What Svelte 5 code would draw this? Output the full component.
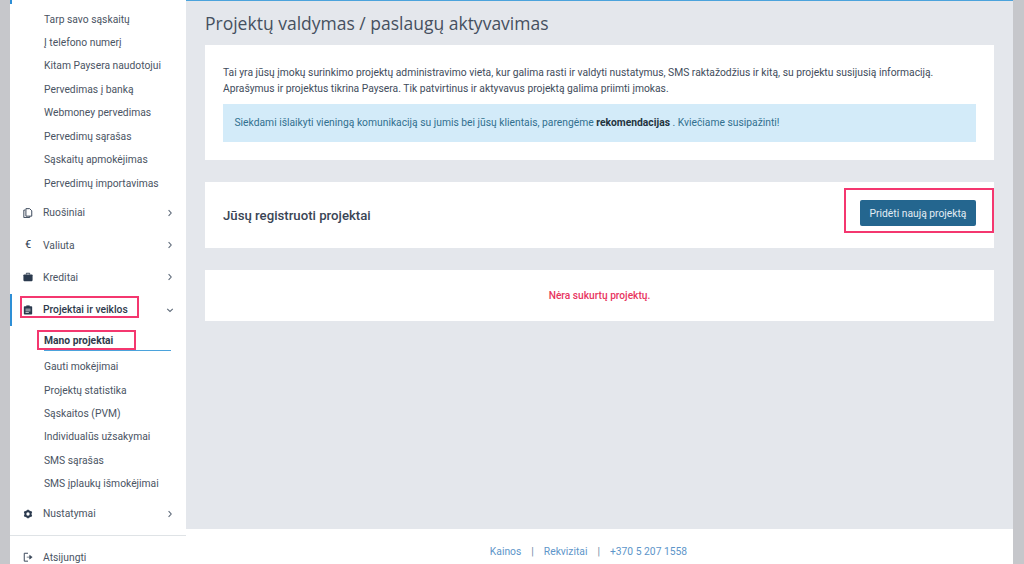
<script>
  const topLinks = ['Tarp savo sąskaitų','Į telefono numerį','Kitam Paysera naudotojui','Pervedimas į banką','Webmoney pervedimas','Pervedimų sąrašas','Sąskaitų apmokėjimas','Pervedimų importavimas'];
  const subLinks = ['Gauti mokėjimai','Projektų statistika','Sąskaitos (PVM)','Individualūs užsakymai','SMS sąrašas','SMS įplaukų išmokėjimai'];
</script>

{#snippet chevron()}
  <svg class="chev" width="8" height="8" viewBox="0 0 8 8"><path d="M2.600 1.200 5.200 4 2.600 6.800" fill="none" stroke="#5f6b7a" stroke-width="1.100"/></svg>
{/snippet}

<div class="page">
  <aside class="side">
    <span class="tick"></span>
    <div class="scroll">
      <ul class="subs top">
        {#each topLinks as l}<li>{l}</li>{/each}
      </ul>
      <div class="item first">
        <svg class="ico" viewBox="0 0 12 12"><path d="M2.500 2.500H1V11.500h7V10" fill="none" stroke="#3d4a5c" stroke-width="1.200"/><path d="M3.500 .8h4.500l2.500 2.500v6.500H3.500z" fill="none" stroke="#3d4a5c" stroke-width="1.200"/></svg>
        <span>Ruošiniai</span>{@render chevron()}
      </div>
      <div class="item">
        <span class="ico euro">€</span>
        <span>Valiuta</span>{@render chevron()}
      </div>
      <div class="item">
        <svg class="ico" viewBox="0 0 12 12"><path d="M4 3V1.500h4V3" fill="none" stroke="#2b3a4e" stroke-width="1.100"/><rect x="0.500" y="3" width="11" height="8" rx="1" fill="#2b3a4e"/></svg>
        <span>Kreditai</span>{@render chevron()}
      </div>
      <div class="item active">
        <svg class="ico" viewBox="0 0 12 12"><rect x="1" y="1.500" width="10" height="10" rx="1" fill="#2b3a4e"/><rect x="4" y="0.500" width="4" height="2" fill="#2b3a4e"/><path d="M3 5h6M3 7h6M3 9h4" stroke="#fff" stroke-width=".8"/></svg>
        <span>Projektai ir veiklos</span>
        <svg class="chev" width="8" height="8" viewBox="0 0 8 8"><path d="M1.200 2.800 4 5.400 6.800 2.800" fill="none" stroke="#5f6b7a" stroke-width="1.100"/></svg>
        <span class="mark markA"></span>
      </div>
      <div class="current"><span>Mano projektai</span><span class="mark markB"></span></div>
      <ul class="subs after">
        {#each subLinks as l}<li>{l}</li>{/each}
      </ul>
      <div class="item settings">
        <svg class="ico" viewBox="0 0 12 12"><circle cx="6" cy="6" r="3.200" fill="none" stroke="#2b3a4e" stroke-width="2.400"/><path d="M6 .8v2M6 9.200v2M1.500 3.400l1.700 1M8.800 7.600l1.700 1M1.500 8.600l1.700-1M8.800 4.400l1.700-1" stroke="#2b3a4e" stroke-width="2"/></svg>
        <span>Nustatymai</span>{@render chevron()}
      </div>
      <div class="item logout">
        <svg class="ico" viewBox="0 0 12 12"><path d="M6 1.500H1.500v9.500H6" fill="none" stroke="#3d4a5c" stroke-width="1.200"/><path d="M4.500 6.200H8V4l3 2.200L8 8.500V6.200" fill="#3d4a5c" stroke="#3d4a5c" stroke-width=".8"/></svg>
        <span>Atsijungti</span>
      </div>
    </div>
  </aside>

  <div class="main">
    <main class="content">
      <h1>Projektų valdymas / paslaugų aktyvavimas</h1>
      <section class="card intro">
        <p>Tai yra jūsų įmokų surinkimo projektų administravimo vieta, kur galima rasti ir valdyti nustatymus, SMS raktažodžius ir kitą, su projektu susijusią informaciją.<br>Aprašymus ir projektus tikrina Paysera. Tik patvirtinus ir aktyvavus projektą galima priimti įmokas.</p>
        <div class="notice">Siekdami išlaikyti vieningą komunikaciją su jumis bei jūsų klientais, parengėme <b>rekomendacijas</b> . Kviečiame susipažinti!</div>
      </section>
      <section class="card head">
        <h2>Jūsų registruoti projektai</h2>
        <button>Pridėti naują projektą<span class="mark markC"></span></button>
      </section>
      <section class="card empty">Nėra sukurtų projektų.</section>
    </main>
    <footer>
      <span>Kainos</span><i>|</i><span>Rekvizitai</span><i>|</i><span>+370 5 207 1558</span>
    </footer>
  </div>
</div>

<style>
  :global(body) { margin: 0; background: #c6c7cb; }
  .page {
    width: 1024px; height: 564px; overflow: hidden; display: flex;
    padding: 0 11px 0 10px; box-sizing: border-box; background: #c6c7cb;
    font-family: Roboto, "Liberation Sans", sans-serif; color: #3f4a5a;
  }
  .side { width: 176px; flex: none; background: #fff; position: relative; overflow: hidden; }
  .tick { position: absolute; left: 0; top: 0; width: 2px; height: 4px; background: #2e8fd6; }
  .scroll { padding-top: 7.500px; }
  ul { list-style: none; margin: 0; padding: 0; }
  .subs li { height: 23.450px; line-height: 23.450px; padding-left: 34px; font-size: 10.300px; color: #4a5463; }
  .item { height: 32.400px; display: flex; align-items: center; position: relative; font-size: 10.300px; color: #4a5463; }
  .item.first { margin-top: 1.500px; }
  .ico { width: 10px; height: 10px; flex: none; margin: 0 10px 0 13px; text-align: center; }
  .euro { font-size: 11px; line-height: 10px; color: #2b3a4e; }
  .chev { position: absolute; right: 12.500px; top: 50%; margin-top: -4px; }
  .active { font-weight: 500; color: #2f3b4d; }
  .active::before { content: ""; position: absolute; left: 0; top: 0; width: 2px; height: 100%; background: #2e8fd6; }
  .current {
    position: relative; height: 25px; margin: 0 15px 0 34px; box-sizing: border-box; padding-top: 8px;
    font-size: 10.300px; font-weight: 700; color: #2f3b4d; border-bottom: 1.500px solid #4ba3dc;
  }
  .subs.after { padding-top: 4px; }
  .settings { margin-top: 2px; }
  .logout { margin-top: 5px; border-top: 1px solid #dfe3e6; height: 42px; }
  .mark { position: absolute; border: 2px solid #f4376f; box-sizing: border-box; pointer-events: none; }
  .markA { left: 9.500px; top: 2.500px; width: 119.500px; height: 22px; }
  .markB { left: -7px; top: 4px; width: 99px; height: 20px; }
  .markC { left: -16px; top: -12px; width: 150px; height: 45px; }

  .main { flex: 1; display: flex; flex-direction: column; background: #e4e7ec; border-top: 1px solid #4ba3dc; min-width: 0; }
  .content { flex: 1; padding: 0 19px; }
  h1 { margin: 12px 0 11px; font: 400 17.500px/21px "Open Sans", sans-serif; color: #46505f; }
  .card { background: #fff; margin-bottom: 22px; }
  .intro { height: 115px; padding: 20px 18px 0; box-sizing: border-box; }
  p { margin: 0; font-size: 10.300px; line-height: 16px; color: #414c5b; }
  .notice {
    margin-top: 7px; height: 38px; line-height: 38px; padding-left: 11.500px;
    background: #d3ebf9; color: #31708f; font-size: 10.300px;
  }
  .notice b { color: #24343f; font-weight: 700; }
  .head { height: 66px; display: flex; align-items: center; justify-content: space-between; padding: 0 18px; }
  h2 { margin: 0; font-size: 13.200px; font-weight: 500; color: #3a4555; }
  button {
    position: relative; width: 116px; height: 26px; margin-bottom: 4px; border: 0; border-radius: 2px; background: #24668f;
    color: #e3edf4; font: 400 10.300px Roboto, sans-serif; padding: 0;
  }
  .empty { height: 51px; line-height: 52px; text-align: center; color: #e8365f; font-size: 10.200px; font-weight: 500; }
  footer {
    height: 35px; flex: none; background: #fff; display: flex; justify-content: center; align-items: center;
    gap: 10px; padding: 9px 22px 0 0; box-sizing: border-box; font-size: 10.300px; color: #5d95c9;
  }
  footer i { font-style: normal; color: #6f8aa3; }
</style>
